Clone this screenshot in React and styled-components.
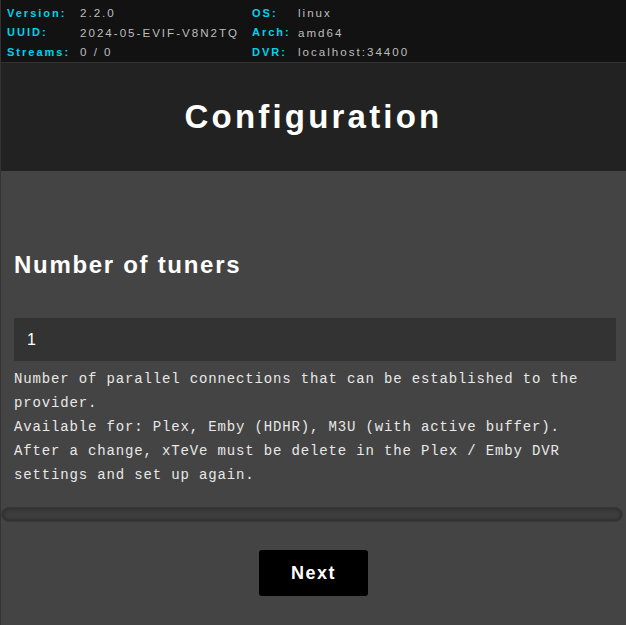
import React from "react";
import styled, { createGlobalStyle } from "styled-components";

const GlobalStyle = createGlobalStyle`
    html, body {
        margin: 0;
        padding: 0;
        background: #444444;
    }
    body {
        font-family: "Liberation Sans", Arial, sans-serif;
    }
`;

const Page = styled.div`
    min-height: 100vh;
    border-left: 1px solid #333333;
    background: #444444;
    display: flex;
    flex-direction: column;
`;

const InfoBar = styled.div`
    background: #121212;
    border-bottom: 1px solid #333333;
    height: 63px;
    box-sizing: border-box;
    padding: 3px 0 0 6px;
    display: grid;
    grid-template-columns: 73px 172px 46px auto;
    grid-auto-rows: 19.5px;
    align-items: center;
    font-size: 11px;
    letter-spacing: 2px;
`;

const Label = styled.span`
    color: #00d2ee;
    font-weight: 700;
    white-space: nowrap;
`;

const Value = styled.span`
    color: #bdbdbd;
    font-size: 11.6px;
    white-space: nowrap;
`;

const Header = styled.header`
    background: #222222;
    height: 108px;
    display: flex;
    align-items: center;
    justify-content: center;
`;

const Title = styled.h1`
    margin: 0;
    color: #ffffff;
    font-size: 33px;
    font-weight: 700;
    letter-spacing: 3.2px;
`;

const Content = styled.main`
    flex: 1;
    padding: 80px 10px 0 13px;
    display: flex;
    flex-direction: column;
`;

const SectionTitle = styled.h2`
    margin: 0 0 39px 0;
    color: #ffffff;
    font-size: 24px;
    font-weight: 700;
    letter-spacing: 1.7px;
    line-height: 28px;
`;

const Input = styled.input`
    box-sizing: border-box;
    width: 100%;
    height: 43px;
    border: none;
    outline: none;
    background: #333333;
    color: #ffffff;
    font-family: "Liberation Sans", Arial, sans-serif;
    font-size: 16px;
    padding: 0 13px;
`;

const Description = styled.p`
    margin: 6px 0 0 0;
    color: #e8e8e8;
    font-family: "Liberation Mono", "Courier New", monospace;
    font-size: 14px;
    line-height: 24px;
    letter-spacing: 0.85px;
`;

const Track = styled.div`
    margin: 20px -10px 0 -13px;
    width: 622px;
    height: 15px;
    box-sizing: border-box;
    border-radius: 8px;
    background: #3d3d3d;
    border: 1px solid #383838;
    box-shadow: inset 0 0 4px rgba(0, 0, 0, 0.45);
`;

const Actions = styled.div`
    display: flex;
    justify-content: center;
    margin: 0 -10px 0 -13px;
    padding: 28px 0 30px 0;
`;

const Button = styled.button`
    width: 109px;
    height: 46px;
    border: none;
    border-radius: 3px;
    background: #000000;
    color: #ffffff;
    font-family: "Liberation Sans", Arial, sans-serif;
    font-size: 18px;
    font-weight: 700;
    letter-spacing: 1.5px;
    cursor: pointer;
`;

const info = [
    ["Version:", "2.2.0", "OS:", "linux"],
    ["UUID:", "2024-05-EVIF-V8N2TQ", "Arch:", "amd64"],
    ["Streams:", "0 / 0", "DVR:", "localhost:34400"],
];

const App = () => {
    return (
        <Page>
            <GlobalStyle />
            <InfoBar>
                {info.map(([l1, v1, l2, v2]) => (
                    <React.Fragment key={l1}>
                        <Label>{l1}</Label>
                        <Value>{v1}</Value>
                        <Label>{l2}</Label>
                        <Value>{v2}</Value>
                    </React.Fragment>
                ))}
            </InfoBar>
            <Header>
                <Title>Configuration</Title>
            </Header>
            <Content>
                <SectionTitle>Number of tuners</SectionTitle>
                <Input type="text" defaultValue="1" />
                <Description>
                    Number of parallel connections that can be established to the provider.
                    <br />
                    Available for: Plex, Emby (HDHR), M3U (with active buffer).
                    <br />
                    After a change, xTeVe must be delete in the Plex / Emby DVR settings and set up again.
                </Description>
                <Track />
                <Actions>
                    <Button>Next</Button>
                </Actions>
            </Content>
        </Page>
    );
};

export default App;
